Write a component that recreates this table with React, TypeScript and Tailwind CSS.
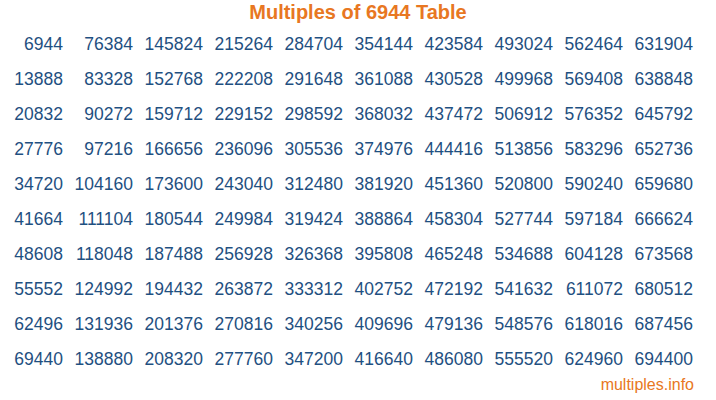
const base = 6944
const rows = Array.from({ length: 10 }, (_, r) => r)
const cols = Array.from({ length: 10 }, (_, c) => c)

export default function App() {
  return (
    <div className="w-[716px] h-[400px] bg-white overflow-hidden font-['Liberation_Sans',Arial,sans-serif]">
      {/* Title */}
      <h1 className="text-center text-[20px] leading-[24px] font-bold text-[#e87722]">
        Multiples of {base} Table
      </h1>

      {/* Grid of multiples */}
      <div className="mt-[3px] grid grid-cols-[repeat(10,70px)] text-[17.5px] leading-[35px] text-[#1f5081]">
        {rows.map((r) =>
          cols.map((c) => (
            <div key={`${r}-${c}`} className="text-right pr-[7px]">
              {base * (c * 10 + r + 1)}
            </div>
          ))
        )}
      </div>

      {/* Footer */}
      <div className="text-right pr-[22px] text-[16px] leading-4 text-[#e87722]">multiples.info</div>
    </div>
  )
}
